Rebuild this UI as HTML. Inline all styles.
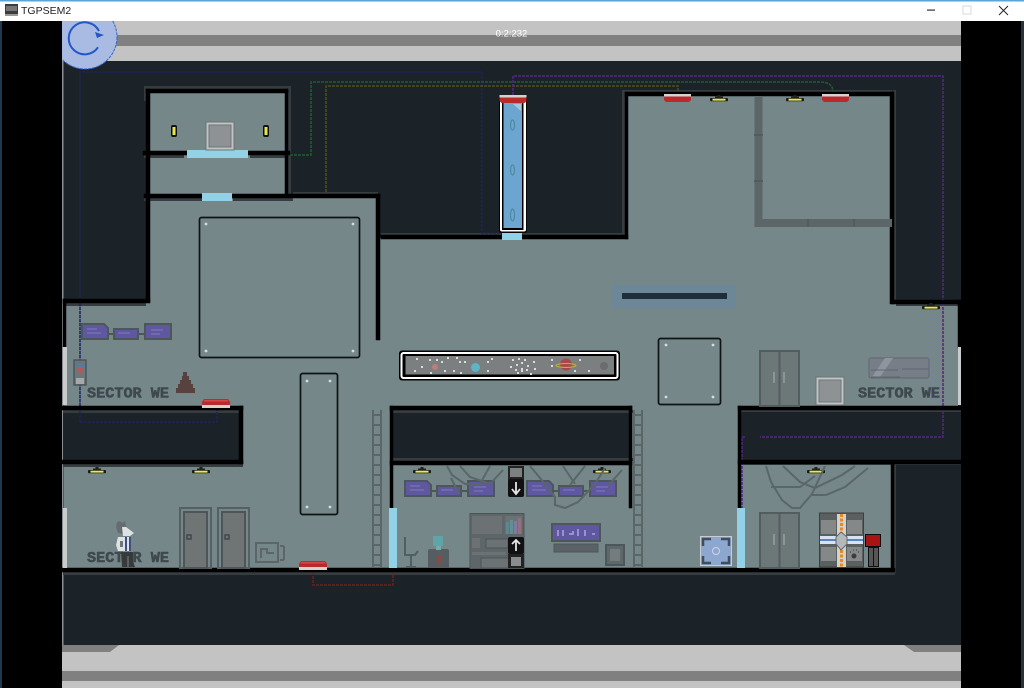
<!DOCTYPE html>
<html><head><meta charset="utf-8"><title>TGPSEM2</title>
<style>
html,body{margin:0;padding:0;background:#000;width:1024px;height:688px;overflow:hidden}
svg{display:block;filter:blur(.35px)}
text{font-family:"Liberation Sans",sans-serif}
.s{font-family:"Liberation Mono",monospace;font-weight:bold;font-size:15px;fill:#3e494e;stroke:#3e494e;stroke-width:.55}
</style></head><body>
<svg width="1024" height="688" viewBox="0 0 1024 688" xmlns="http://www.w3.org/2000/svg">
<defs>
<clipPath id="g"><rect x="62" y="21" width="899" height="667"/></clipPath>
<g id="lamp"><rect x="-1.500" y="-3" width="3" height="2" fill="#222"/><rect x="-4" y="-1.500" width="8" height="1.500" fill="#222"/><rect x="-9" y="0" width="18" height="3.200" rx="1" fill="#1a1a1a"/><rect x="-6.500" y="0.700" width="13" height="1.900" fill="#e8e85a"/></g>
<g id="screen" stroke="#4c575c" stroke-width="2"><path d="M82 324H104L108 328V339H82Z" fill="#5f58a0"/><path d="M114 329H138V339H114Z" fill="#5f58a0"/><path d="M145 324H171V339H145Z" fill="#5f58a0"/><path d="M108 334H114M138 334H145" fill="none"/><path d="M87 329h10M87 333h14M118 333h12M151 330h12M151 334h9" stroke="#7f7abb" stroke-width="1"/></g>
<g id="btn"><path d="M2 0H26L28 3V7H0V3Z" fill="#b92a2c"/><rect x="2" y="1" width="24" height="1.500" fill="#d8484a"/><rect y="6" width="28" height="3" fill="#d7d2cf"/></g>
<g id="btnd"><rect width="27" height="2.500" fill="#d7d2cf"/><path d="M0 2.500H27V6L25 8H2L0 6Z" fill="#b92a2c"/></g>
<g id="ddoor" fill="#6c7778" stroke="#535d60" stroke-width="2"><rect x="1" y="1" width="39" height="55"/><path d="M20.500 1V56" /><path d="M15 22v11M25 22v11" stroke="#8a9596" fill="none"/></g>
<g id="door"><rect x="1" y="1" width="31" height="60" fill="#76878a" stroke="#565f62" stroke-width="2"/><rect x="5" y="5" width="23" height="56" fill="#6f7475" stroke="#4d5558" stroke-width="2"/><rect x="8" y="28" width="4" height="4" fill="none" stroke="#3f484c" stroke-width="1.500"/></g>
<g id="crate"><rect width="28" height="28" fill="#c0c3c3" stroke="#6a7577"/><rect x="3" y="3" width="22" height="22" fill="#8e9294" stroke="#70777a"/></g>
<g id="ladder" stroke="#5b6669" fill="none" stroke-width="2"><path d="M1 0V158M9 0V158"/><path d="M1 5H9M1 15H9M1 25H9M1 35H9M1 45H9M1 55H9M1 65H9M1 75H9M1 85H9M1 95H9M1 105H9M1 115H9M1 125H9M1 135H9M1 145H9M1 155H9"/></g>
<g id="sc" fill="#d5dcdc"><circle r="1.400"/></g>
</defs>

<!-- window chrome -->
<rect width="1024" height="688" fill="#000"/>
<rect x="0" y="0" width="2" height="688" fill="#1d3a4e"/>
<rect x="1021" y="0" width="3" height="688" fill="#26323c"/>
<rect x="0" y="0" width="1024" height="21" fill="#fff"/>
<rect x="0" y="0" width="1024" height="1.500" fill="#5aa5d6"/>
<rect x="5" y="4" width="13" height="12" fill="#3c3c3c"/><rect x="6" y="6" width="11" height="5" fill="#777"/><rect x="5" y="14" width="13" height="2" fill="#999"/>
<text x="21" y="14" font-size="10.500" fill="#222">TGPSEM2</text>
<rect x="927" y="9.500" width="8" height="1.200" fill="#333"/>
<rect x="963" y="6" width="8" height="8" fill="none" stroke="#d9d9d9"/>
<path d="M999 6L1008 15M1008 6L999 15" stroke="#222" stroke-width="1"/>

<g clip-path="url(#g)">
<!-- bands -->
<rect x="62" y="21" width="899" height="14" fill="#c3c3c3"/>
<rect x="62" y="35" width="899" height="11" fill="#808080"/>
<rect x="62" y="46" width="899" height="15" fill="#c3c3c3"/>
<rect x="62" y="61" width="899" height="584" fill="#1b2329"/>
<rect x="62" y="645" width="899" height="26" fill="#c3c3c3"/>
<rect x="62" y="671" width="899" height="10" fill="#808080"/>
<rect x="62" y="681" width="899" height="7" fill="#c3c3c3"/>
<path d="M62 645H119L110 652H62ZM961 645H904L914 652H961Z" fill="#808080"/>
<rect x="62" y="61" width="1.500" height="584" fill="#8a8f91"/>
<text x="511.500" y="36.500" font-size="9.500" fill="#fff" text-anchor="middle">0:2:232</text>

<!-- floors -->
<path fill="#76878a" d="M150 93H287V195H378V238H627V95H892V302H958V406H740V465H892V568H64V463H242V406H64V302H148V197H150Z"/>
<rect x="391" y="408" width="240" height="160" fill="#76878a"/>
<!-- dark blocks -->
<rect x="63" y="408" width="177" height="54" fill="#1b2329"/>
<rect x="392" y="408" width="238" height="54" fill="#1b2329"/>
<rect x="740" y="408" width="221" height="54" fill="#1b2329"/>
<rect x="893" y="466" width="68" height="102" fill="#1b2329"/>

<!-- wall shadows -->
<g fill="#363c40">
<rect x="144" y="86" width="147" height="3"/><rect x="144" y="86" width="3" height="15"/><rect x="288" y="86" width="3" height="112"/>
<rect x="144" y="155" width="40" height="3"/><rect x="250" y="155" width="40" height="3"/>
<rect x="144" y="198" width="58" height="3"/><rect x="233" y="198" width="60" height="3"/><rect x="293" y="192" width="85" height="2"/>
<rect x="381" y="233" width="120" height="3"/><rect x="522" y="233" width="100" height="3"/><rect x="622" y="90" width="3" height="146"/><rect x="622" y="90" width="270" height="2"/><rect x="893" y="90" width="3" height="212"/>
<rect x="63" y="410" width="180" height="3"/><rect x="63" y="464" width="180" height="3"/>
<rect x="390" y="410" width="243" height="3"/><rect x="390" y="458" width="243" height="3"/>
<rect x="740" y="409" width="221" height="3"/><rect x="743" y="463" width="218" height="2"/>
<rect x="893" y="465" width="3" height="108"/>
<rect x="63" y="572" width="832" height="3"/>
<rect x="66" y="303" width="80" height="3"/><rect x="896" y="303" width="62" height="3"/>
</g>

<!-- wires -->
<g fill="none" stroke-width="1.500" stroke-dasharray="3 1">
<path d="M80 422V72H482V233H500M80 422H217V407" stroke="#1c2452"/>
<path d="M250 155H311V82H820Q833 82 833 92" stroke="#1c5e2f"/>
<path d="M233 195H326V86H678V95" stroke="#50501a"/>
<path d="M513 95V76H943V437H760M745 437H742V508" stroke="#512781"/>
<path d="M313 572V585H393V572" stroke="#6e2020"/>
</g>
<g fill="none" stroke-width="1.200" stroke-dasharray="3 1" opacity=".6">
<path d="M80 306V410" stroke="#2b3a78"/>
<path d="M943 303V406" stroke="#5a2a8c"/>
</g>

<!-- black walls -->
<g fill="#000" stroke="#000" stroke-width=".5">
<rect x="146" y="89" width="142" height="4"/><rect x="146" y="89" width="4" height="213"/><rect x="285" y="89" width="3" height="107"/>
<rect x="143" y="151" width="44" height="4"/><rect x="248" y="151" width="42" height="4"/>
<rect x="144" y="194" width="58" height="4"/><rect x="232" y="194" width="148" height="4"/>
<rect x="376" y="194" width="4" height="146"/>
<rect x="381" y="235" width="121" height="4"/><rect x="522" y="235" width="106" height="4"/>
<rect x="625" y="92" width="3" height="147"/><rect x="625" y="92" width="268" height="4"/>
<rect x="890" y="92" width="4" height="212"/><rect x="892" y="300" width="69" height="4"/>
<rect x="958" y="300" width="3" height="48"/>
<rect x="63" y="299" width="87" height="4"/><rect x="63" y="299" width="3" height="48"/>
<rect x="62" y="406" width="181" height="4"/><rect x="239" y="406" width="4" height="58"/><rect x="62" y="460" width="181" height="4"/>
<rect x="390" y="406" width="242" height="4"/><rect x="390" y="461" width="242" height="4"/><rect x="390" y="406" width="3" height="102"/><rect x="629" y="406" width="3" height="102"/>
<rect x="738" y="406" width="223" height="4"/><rect x="738" y="460" width="223" height="4"/><rect x="738" y="406" width="3" height="102"/>
<rect x="891" y="462" width="3" height="108"/>
<rect x="62" y="568" width="833" height="4"/>
</g>
<g fill="#c9cccc">
<rect x="63" y="347" width="4" height="58"/><rect x="958" y="347" width="3" height="58"/><rect x="63" y="508" width="4" height="60"/>
</g>

<!-- light doors -->
<g fill="#93d2e6">
<rect x="187" y="150" width="61" height="8"/><rect x="202" y="193" width="30" height="8"/><rect x="502" y="232" width="20" height="8"/>
<rect x="389" y="508" width="8" height="60"/><rect x="737" y="508" width="8" height="60"/>
</g>

<!-- plates -->
<g fill="none" stroke="#0e1416" stroke-width="1.700">
<rect x="199.500" y="217.500" width="160" height="140" rx="2"/>
<rect x="300.500" y="373.500" width="37" height="141" rx="2"/>
<rect x="658.500" y="338.500" width="62" height="66" rx="2"/>
</g>
<use href="#sc" x="206" y="224"/><use href="#sc" x="353" y="224"/><use href="#sc" x="206" y="351"/><use href="#sc" x="353" y="351"/>
<use href="#sc" x="307" y="381"/><use href="#sc" x="330" y="381"/><use href="#sc" x="307" y="507"/><use href="#sc" x="330" y="507"/>
<use href="#sc" x="666" y="345"/><use href="#sc" x="713" y="345"/><use href="#sc" x="666" y="397"/><use href="#sc" x="713" y="397"/>

<!-- top room -->
<g><rect x="171" y="125" width="6" height="12" rx="2" fill="#111"/><rect x="172.500" y="127" width="3" height="8" fill="#e6e64a"/><rect x="263" y="125" width="6" height="12" rx="2" fill="#111"/><rect x="264.500" y="127" width="3" height="8" fill="#e6e64a"/></g>
<use href="#crate" x="206" y="122"/>

<!-- tube -->
<rect x="499" y="96" width="28" height="137" rx="2" fill="#060606"/>
<rect x="500" y="100" width="26" height="131.500" rx="2" fill="#fff"/>
<rect x="502" y="101" width="21.500" height="129" fill="#000"/>
<rect x="503.500" y="103" width="18.500" height="125" fill="#6ca5cf"/>
<path d="M513 104L521 111V104Z" fill="#a6c8de"/>
<g fill="none" stroke="#4e8a9f" stroke-width="1.200"><ellipse cx="512.500" cy="125" rx="2" ry="5"/><ellipse cx="512.500" cy="170" rx="2" ry="5"/><ellipse cx="512.500" cy="215" rx="2" ry="6"/></g>
<use href="#btnd" x="499.500" y="95"/>
<use href="#btnd" x="664" y="94"/>
<use href="#btnd" x="822" y="94"/>

<!-- lamps -->
<use href="#lamp" x="719" y="98"/><use href="#lamp" x="795" y="98"/><use href="#lamp" x="931" y="306"/>
<use href="#lamp" x="97" y="470"/><use href="#lamp" x="201" y="470"/><use href="#lamp" x="422" y="470"/><use href="#lamp" x="602" y="470"/><use href="#lamp" x="816" y="470"/>

<!-- pipe frame -->
<path d="M758.500 96V223H892" fill="none" stroke="#5c6568" stroke-width="8"/>
<path d="M754 135h9M754 181h9M808 219v8M854 219v8" stroke="#4f585b" stroke-width="1.500"/>

<!-- vent -->
<rect x="612" y="285" width="124" height="23" fill="#6c8798"/>
<rect x="622" y="293" width="105" height="6" fill="#1f2e38"/>

<!-- space bar -->
<rect x="399" y="350.500" width="221" height="30" rx="3" fill="#000"/>
<rect x="400.500" y="352" width="218" height="27" rx="3" fill="#fff"/>
<rect x="402.500" y="354" width="214" height="23" rx="1" fill="#000"/>
<rect x="405.500" y="356" width="208.500" height="18.500" fill="#7c7f80"/>
<g fill="#d8dcdc">
<rect x="416" y="358" width="2" height="2"/><rect x="421" y="366" width="2" height="2"/><rect x="414" y="370" width="2" height="2"/><rect x="429" y="359" width="2" height="2"/><rect x="436" y="359" width="2" height="2"/><rect x="441" y="361" width="2" height="2"/><rect x="447" y="357" width="2" height="2"/><rect x="456" y="357" width="2" height="2"/><rect x="459" y="361" width="2" height="2"/><rect x="464" y="361" width="2" height="2"/><rect x="444" y="370" width="2" height="2"/><rect x="453" y="370" width="2" height="2"/><rect x="460" y="372" width="2" height="2"/><rect x="430" y="372" width="2" height="2"/><rect x="487" y="361" width="2" height="2"/><rect x="491" y="358" width="2" height="2"/><rect x="487" y="370" width="2" height="2"/>
<rect x="512" y="359" width="2" height="2"/><rect x="518" y="358" width="2" height="2"/><rect x="524" y="359" width="2" height="2"/><rect x="533" y="361" width="2" height="2"/><rect x="516" y="364" width="2" height="2"/><rect x="521" y="362" width="2" height="2"/><rect x="527" y="365" width="2" height="2"/><rect x="510" y="366" width="2" height="2"/><rect x="515" y="369" width="2" height="2"/><rect x="521" y="368" width="2" height="4"/><rect x="526" y="369" width="2" height="2"/><rect x="534" y="368" width="2" height="2"/><rect x="517" y="372" width="2" height="2"/><rect x="530" y="373" width="2" height="2"/>
<rect x="551" y="359" width="2" height="2"/><rect x="551" y="365" width="2" height="2"/><rect x="579" y="359" width="2" height="2"/><rect x="588" y="370" width="2" height="2"/><rect x="574" y="370" width="2" height="2"/>
</g>
<circle cx="435" cy="367" r="3" fill="#bd7d78"/>
<circle cx="475.500" cy="367.500" r="4.500" fill="#5cb4c6"/>
<circle cx="566" cy="364.500" r="6" fill="#a64a48"/>
<ellipse cx="566" cy="365.500" rx="10" ry="2" fill="none" stroke="#c2ae45" stroke-width="1"/>
<circle cx="604" cy="366" r="4" fill="#6a6c6d"/>

<!-- screens -->
<use href="#screen"/>
<use href="#screen" x="323" y="157"/>
<use href="#screen" x="445" y="157"/>

<!-- left extras -->
<rect x="74" y="360" width="12" height="25" fill="#6c7578" stroke="#4c565a" stroke-width="1.500"/>
<rect x="75" y="363" width="10" height="4" fill="#5a7a93"/><path d="M77 367H83L80 375Z" fill="#c55050"/><rect x="76" y="378" width="8" height="6" fill="#a5a9a9"/>
<text class="s" x="87" y="397.500" textLength="82" lengthAdjust="spacingAndGlyphs">SECTOR WE</text>
<path d="M183 372H187V376H189V380H191V384H193V388H195V393H176V388H178V384H180V380H182V376H183Z" fill="#57423f"/>
<use href="#btn" x="202" y="399"/>

<!-- lower left -->
<use href="#door" x="179" y="507"/>
<use href="#door" x="217" y="507"/>
<g fill="none" stroke="#5c6669" stroke-width="2"><rect x="256" y="543" width="22" height="19"/><path d="M261 558V549H267V553H274"/><path d="M280 546h4M284 546v14M280 560h4"/></g>
<text class="s" x="87" y="562" textLength="82" lengthAdjust="spacingAndGlyphs">SECTOR WE</text>
<use href="#ladder" x="372" y="410"/>
<use href="#ladder" x="633" y="410"/>
<use href="#btn" x="299" y="561"/>

<!-- character -->
<path d="M117 522L120 521L122 523L125 521L126 526L123 534L118 533L116 527Z" fill="#666c70"/>
<path d="M122 527L126 527L134 533L130 536L123 536Z" fill="#dfe2e2"/>
<path d="M118 537H131V551H118L116 545Z" fill="#dfe2e2"/>
<path d="M125 537H127V551H125ZM129 537H131V551H129Z" fill="#3c4f86"/>
<rect x="120" y="541" width="3" height="6" fill="#6a7a80"/>
<path d="M121 552H133V561L135 567H122Z" fill="#363a3b"/>
<rect x="127" y="556" width="2" height="11" fill="#5a6063"/>

<!-- cobwebs -->
<g fill="none" stroke="#5a6668" stroke-width="2">
<path d="M447 466L452 475L465 484H480L490 466"/><path d="M460 466L470 477L490 484L503 470"/><path d="M451 478L458 492"/>
<path d="M530 466L545 484L555 497L555 505L565 508L578 502L595 484L605 468"/><path d="M563 466L575 484"/><path d="M585 466L570 485"/><path d="M622 470L608 486"/>
<path d="M766 466L771 482L782 500L792 508L800 508L812 494L825 466"/><path d="M783 466L800 482L815 488L842 475L855 466"/><path d="M771 487H800L815 476"/><path d="M812 495H826L845 487L868 468"/>
</g>

<!-- arrow column -->
<rect x="508" y="466" width="16" height="14" fill="#222"/><rect x="510" y="468" width="12" height="9" fill="#7d8080"/>
<rect x="508" y="479" width="16" height="18" rx="2" fill="#111"/>
<path d="M516 482V494M512 489L516 494L520 489" stroke="#e6e6e6" stroke-width="1.800" fill="none"/>

<!-- bookshelf -->
<rect x="470" y="513.500" width="54" height="55" fill="#5e6669" stroke="#4b5558" stroke-width="1"/>
<rect x="472" y="516" width="30" height="18" fill="#6c7274"/>
<rect x="505" y="516" width="17" height="18" fill="#6c7274"/>
<rect x="506" y="522" width="3" height="12" fill="#5d8790"/><rect x="510" y="520" width="3" height="14" fill="#638f8f"/><rect x="514" y="521" width="3" height="13" fill="#7b7da0"/><rect x="518" y="518" width="3" height="16" fill="#96707e"/>
<rect x="472" y="538" width="8" height="10" fill="#6c7274"/><rect x="486" y="539" width="22" height="9" fill="#6c7274" stroke="#4b5558"/>
<rect x="472" y="552" width="34" height="3" fill="#6c7274"/>
<rect x="481" y="558" width="28" height="10" fill="#6c7274" stroke="#4b5558"/>
<rect x="508" y="537" width="16" height="17" rx="2" fill="#111"/>
<path d="M516 551V540M512 544L516 540L520 544" stroke="#e6e6e6" stroke-width="1.800" fill="none"/>
<rect x="508" y="554" width="16" height="14" fill="#222"/><rect x="511" y="557" width="10" height="9" fill="#8a8d8d"/>

<!-- chair, table -->
<g fill="none" stroke="#535e62" stroke-width="2"><path d="M405 537V555H415L418 551"/><path d="M411 555V567M406 567H416"/></g>
<rect x="428" y="549" width="21" height="19" rx="2" fill="#555d61"/><rect x="437" y="556" width="5" height="8" fill="#8c4848"/>
<rect x="433" y="536" width="10" height="10" fill="#5fa4a9"/><rect x="436" y="546" width="5" height="4" fill="#7aa"/>
<rect x="552" y="524" width="48" height="17" fill="#5f58a0" stroke="#4c575c" stroke-width="2"/>
<path d="M558 530v6M563 530v6M569 534h4v-3M578 529v7M585 530v6M592 534h3" stroke="#a9a5da" stroke-width="1.500" fill="none"/>
<rect x="554" y="544" width="44" height="8" fill="#5a6265" stroke="#4c575c"/>
<rect x="606" y="545" width="18" height="20" fill="#5e686b" stroke="#4c575c" stroke-width="2"/><rect x="610" y="549" width="10" height="12" fill="#747c7e"/>

<!-- right upper -->
<use href="#ddoor" x="759" y="350"/>
<use href="#crate" x="816" y="377"/>
<rect x="869" y="358" width="60" height="20" rx="2" fill="#777e87" stroke="#5d6870"/>
<path d="M872 377L885 358H893L880 377Z" fill="#8f959c"/>
<path d="M871 370H898M871 377H900M902 369H929" stroke="#5d6870" stroke-width="1"/>
<text class="s" x="858" y="397.500" textLength="82" lengthAdjust="spacingAndGlyphs">SECTOR WE</text>

<!-- right lower -->
<use href="#ddoor" x="759" y="512"/>
<rect x="700.500" y="536.500" width="31" height="29" fill="#8ea7cf" stroke="#c7cdd3" stroke-width="1"/>
<path d="M703 546V539H711M721 539H729V546M729 556V563H721M711 563H703V556" fill="none" stroke="#3f4d5c" stroke-width="2.500"/>
<circle cx="716" cy="551" r="3.500" fill="none" stroke="#c7d5ee"/>

<rect x="819.500" y="513" width="44" height="54" fill="#5a5f60" stroke="#3e3e3e"/>
<rect x="821" y="520" width="15" height="14" fill="#858889"/><rect x="847" y="520" width="15" height="14" fill="#858889"/>
<rect x="821" y="547" width="15" height="14" fill="#858889"/><rect x="847" y="547" width="15" height="14" fill="#858889"/>
<rect x="837" y="514" width="9" height="53" fill="#d6d2c8"/>
<path d="M841.500 514V567" stroke="#e68a25" stroke-width="3" stroke-dasharray="3 1.500"/>
<rect x="820" y="536" width="43" height="8" fill="#d7e3f2"/>
<rect x="820" y="539" width="43" height="2" fill="#5c84c0"/>
<path d="M841 532L847 537V544L841 550L836 544V537Z" fill="#b4b8ba" stroke="#666"/>
<circle cx="854" cy="556" r="2.500" fill="#3b3b3b"/><path d="M850 552h1M853 550h1M856 550h1M858 552h1" stroke="#3b3b3b"/>
<rect x="868" y="546" width="11" height="21" fill="#111"/><path d="M870 548V566M872 548V566M875 548V566M877 548V566" stroke="#9a9a9a" stroke-width="1"/>
<rect x="865.500" y="534.500" width="15" height="12" fill="#a81414" stroke="#0c0c0c"/>

<!-- reload circle -->
<circle cx="85" cy="37" r="32" fill="#a9bbe3" stroke="#3666c8" stroke-width="1" stroke-dasharray="3 1"/>
<path d="M99 31A16 16 0 1 0 98 47.300" fill="none" stroke="#2257c7" stroke-width="2"/>
<path d="M95 32L104 35L97 38Z" fill="#2257c7"/>
</g>
</svg>
</body></html>
